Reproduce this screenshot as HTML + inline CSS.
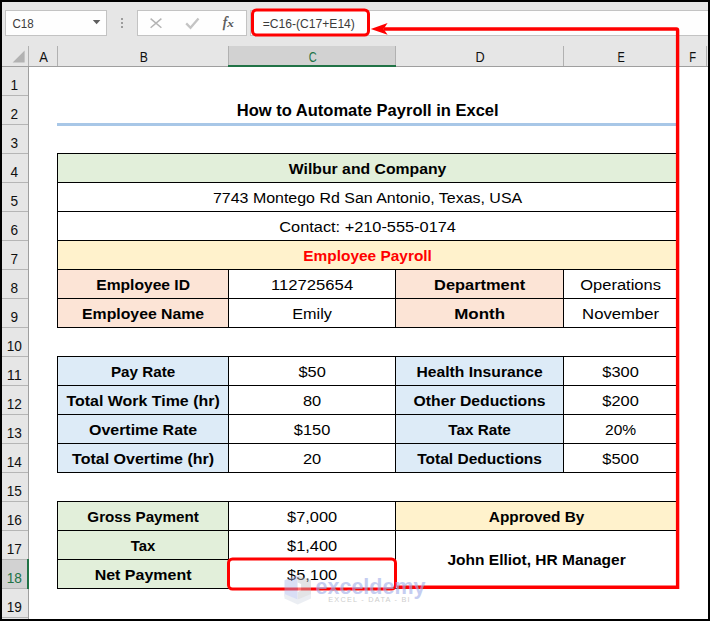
<!DOCTYPE html>
<html lang="en"><head><meta charset="utf-8"><title>How to Automate Payroll in Excel</title>
<style>
html,body{margin:0;padding:0;background:#fff;}
body{width:710px;height:621px;overflow:hidden;}
svg{display:block;font-family:"Liberation Sans",sans-serif;}
svg rect:not([rx]){shape-rendering:crispEdges;}
</style></head><body>
<svg width="710" height="621" viewBox="0 0 710 621">
<rect x="0" y="0" width="710" height="621" fill="#000"/>
<rect x="2" y="2" width="706" height="617" fill="#fff"/>
<rect x="2" y="2" width="706" height="64" fill="#e6e6e6"/>
<rect x="5" y="10" width="102" height="26" fill="#c3c3c3"/>
<rect x="6" y="11" width="100" height="24" fill="#fefefe"/>
<rect x="137" y="10" width="110" height="26" fill="#c3c3c3"/>
<rect x="138" y="11" width="108" height="24" fill="#fefefe"/>
<rect x="250" y="10" width="458" height="26" fill="#c3c3c3"/>
<rect x="251" y="11" width="457" height="24" fill="#fefefe"/>
<text x="23.00" y="27.70" font-size="12" text-anchor="middle" textLength="21.20" lengthAdjust="spacingAndGlyphs" fill="#3b3b3b">C18</text>
<path d="M92.8 20h7.6l-3.8 4.2z" fill="#5e5e5e"/>
<rect x="121" y="18" width="2" height="2" fill="#9c9c9c"/>
<rect x="121" y="22" width="2" height="2" fill="#9c9c9c"/>
<rect x="121" y="26" width="2" height="2" fill="#9c9c9c"/>
<path d="M150.6 18.6l10.8 9.2M161.4 18.6l-10.8 9.2" stroke="#b4b4b4" stroke-width="1.5" fill="none"/>
<path d="M186.2 23.4l4.3 4.3l8-9.2" stroke="#c4c4c4" stroke-width="2.3" fill="none"/>
<text x="222.8" y="26.7" font-family="'Liberation Serif',serif" font-style="italic" font-size="14.6" fill="#505050" stroke="#505050" stroke-width="0.35">f</text>
<text x="227.3" y="27.4" font-family="'Liberation Serif',serif" font-style="italic" font-weight="700" font-size="10" textLength="6.6" lengthAdjust="spacingAndGlyphs" fill="#555">x</text>
<text x="262.70" y="27.80" font-size="12" text-anchor="start" textLength="92.20" lengthAdjust="spacingAndGlyphs" fill="#3b3b3b">=C16-(C17+E14)</text>
<rect x="2" y="66" width="26" height="553" fill="#e6e6e6"/>
<rect x="228" y="46" width="168" height="20" fill="#d2d2d2"/>
<rect x="2" y="559" width="26" height="29" fill="#d2d2d2"/>
<rect x="2" y="66" width="706" height="1" fill="#9f9f9f"/>
<rect x="28" y="46" width="1" height="20" fill="#b1b1b1"/>
<rect x="57" y="46" width="1" height="20" fill="#b1b1b1"/>
<rect x="228" y="46" width="1" height="20" fill="#b1b1b1"/>
<rect x="395" y="46" width="1" height="20" fill="#b1b1b1"/>
<rect x="563" y="46" width="1" height="20" fill="#b1b1b1"/>
<rect x="677" y="46" width="1" height="20" fill="#b1b1b1"/>
<rect x="706" y="46" width="1" height="20" fill="#b1b1b1"/>
<rect x="228" y="65" width="168" height="2" fill="#217346"/>
<rect x="28" y="66" width="1" height="553" fill="#9f9f9f"/>
<rect x="2" y="95" width="26" height="1" fill="#b5b5b5"/>
<rect x="2" y="124" width="26" height="1" fill="#b5b5b5"/>
<rect x="2" y="153" width="26" height="1" fill="#b5b5b5"/>
<rect x="2" y="182" width="26" height="1" fill="#b5b5b5"/>
<rect x="2" y="211" width="26" height="1" fill="#b5b5b5"/>
<rect x="2" y="240" width="26" height="1" fill="#b5b5b5"/>
<rect x="2" y="269" width="26" height="1" fill="#b5b5b5"/>
<rect x="2" y="298" width="26" height="1" fill="#b5b5b5"/>
<rect x="2" y="327" width="26" height="1" fill="#b5b5b5"/>
<rect x="2" y="356" width="26" height="1" fill="#b5b5b5"/>
<rect x="2" y="385" width="26" height="1" fill="#b5b5b5"/>
<rect x="2" y="414" width="26" height="1" fill="#b5b5b5"/>
<rect x="2" y="443" width="26" height="1" fill="#b5b5b5"/>
<rect x="2" y="472" width="26" height="1" fill="#b5b5b5"/>
<rect x="2" y="501" width="26" height="1" fill="#b5b5b5"/>
<rect x="2" y="530" width="26" height="1" fill="#b5b5b5"/>
<rect x="2" y="559" width="26" height="1" fill="#b5b5b5"/>
<rect x="2" y="588" width="26" height="1" fill="#b5b5b5"/>
<rect x="2" y="617" width="26" height="1" fill="#b5b5b5"/>
<rect x="27" y="559" width="2" height="30" fill="#217346"/>
<path d="M24.6 50.6V62.6H12.6z" fill="#b2b2b2"/>
<text x="43.70" y="61.70" font-size="14" text-anchor="middle" textLength="8.66" lengthAdjust="spacingAndGlyphs" fill="#101010">A</text>
<text x="143.70" y="61.70" font-size="14" text-anchor="middle" textLength="8.14" lengthAdjust="spacingAndGlyphs" fill="#101010">B</text>
<text x="312.70" y="61.70" font-size="14" text-anchor="middle" textLength="7.98" lengthAdjust="spacingAndGlyphs" fill="#217346">C</text>
<text x="480.20" y="61.70" font-size="14" text-anchor="middle" textLength="9.20" lengthAdjust="spacingAndGlyphs" fill="#101010">D</text>
<text x="621.20" y="61.70" font-size="14" text-anchor="middle" textLength="7.30" lengthAdjust="spacingAndGlyphs" fill="#101010">E</text>
<text x="692.70" y="61.70" font-size="14" text-anchor="middle" textLength="6.87" lengthAdjust="spacingAndGlyphs" fill="#101010">F</text>
<text x="14.30" y="89.60" font-size="14.2" text-anchor="middle" textLength="7.58" lengthAdjust="spacingAndGlyphs" fill="#101010">1</text>
<text x="14.30" y="118.60" font-size="14.2" text-anchor="middle" textLength="7.58" lengthAdjust="spacingAndGlyphs" fill="#101010">2</text>
<text x="14.30" y="147.60" font-size="14.2" text-anchor="middle" textLength="7.58" lengthAdjust="spacingAndGlyphs" fill="#101010">3</text>
<text x="14.30" y="176.60" font-size="14.2" text-anchor="middle" textLength="7.58" lengthAdjust="spacingAndGlyphs" fill="#101010">4</text>
<text x="14.30" y="205.60" font-size="14.2" text-anchor="middle" textLength="7.58" lengthAdjust="spacingAndGlyphs" fill="#101010">5</text>
<text x="14.30" y="234.60" font-size="14.2" text-anchor="middle" textLength="7.58" lengthAdjust="spacingAndGlyphs" fill="#101010">6</text>
<text x="14.30" y="263.60" font-size="14.2" text-anchor="middle" textLength="7.58" lengthAdjust="spacingAndGlyphs" fill="#101010">7</text>
<text x="14.30" y="292.60" font-size="14.2" text-anchor="middle" textLength="7.58" lengthAdjust="spacingAndGlyphs" fill="#101010">8</text>
<text x="14.30" y="321.60" font-size="14.2" text-anchor="middle" textLength="7.58" lengthAdjust="spacingAndGlyphs" fill="#101010">9</text>
<text x="14.30" y="350.60" font-size="14.2" text-anchor="middle" textLength="15.17" lengthAdjust="spacingAndGlyphs" fill="#101010">10</text>
<text x="14.30" y="379.60" font-size="14.2" text-anchor="middle" textLength="15.17" lengthAdjust="spacingAndGlyphs" fill="#101010">11</text>
<text x="14.30" y="408.60" font-size="14.2" text-anchor="middle" textLength="15.17" lengthAdjust="spacingAndGlyphs" fill="#101010">12</text>
<text x="14.30" y="437.60" font-size="14.2" text-anchor="middle" textLength="15.17" lengthAdjust="spacingAndGlyphs" fill="#101010">13</text>
<text x="14.30" y="466.60" font-size="14.2" text-anchor="middle" textLength="15.17" lengthAdjust="spacingAndGlyphs" fill="#101010">14</text>
<text x="14.30" y="495.60" font-size="14.2" text-anchor="middle" textLength="15.17" lengthAdjust="spacingAndGlyphs" fill="#101010">15</text>
<text x="14.30" y="524.60" font-size="14.2" text-anchor="middle" textLength="15.17" lengthAdjust="spacingAndGlyphs" fill="#101010">16</text>
<text x="14.30" y="553.60" font-size="14.2" text-anchor="middle" textLength="15.17" lengthAdjust="spacingAndGlyphs" fill="#101010">17</text>
<text x="14.30" y="582.60" font-size="14.2" text-anchor="middle" textLength="15.17" lengthAdjust="spacingAndGlyphs" fill="#217346">18</text>
<text x="14.30" y="611.60" font-size="14.2" text-anchor="middle" textLength="15.17" lengthAdjust="spacingAndGlyphs" fill="#101010">19</text>
<rect x="57" y="153" width="620" height="29" fill="#e2efda"/>
<rect x="57" y="240" width="620" height="29" fill="#fff2cc"/>
<rect x="57" y="269" width="171" height="58" fill="#fce4d6"/>
<rect x="395" y="269" width="168" height="58" fill="#fce4d6"/>
<rect x="57" y="356" width="171" height="116" fill="#ddebf7"/>
<rect x="395" y="356" width="168" height="116" fill="#ddebf7"/>
<rect x="57" y="501" width="171" height="87" fill="#e2efda"/>
<rect x="395" y="501" width="282" height="29" fill="#fff2cc"/>
<rect x="57" y="123" width="620" height="3" fill="#a8c7e7"/>
<rect x="57" y="153" width="621" height="1" fill="#000"/>
<rect x="57" y="182" width="621" height="1" fill="#000"/>
<rect x="57" y="211" width="621" height="1" fill="#000"/>
<rect x="57" y="240" width="621" height="1" fill="#000"/>
<rect x="57" y="269" width="621" height="1" fill="#000"/>
<rect x="57" y="298" width="621" height="1" fill="#000"/>
<rect x="57" y="327" width="621" height="1" fill="#000"/>
<rect x="57" y="153" width="1" height="175" fill="#000"/>
<rect x="676" y="153" width="1" height="175" fill="#000"/>
<rect x="228" y="269" width="1" height="58" fill="#000"/>
<rect x="395" y="269" width="1" height="58" fill="#000"/>
<rect x="563" y="269" width="1" height="58" fill="#000"/>
<rect x="57" y="356" width="621" height="1" fill="#000"/>
<rect x="57" y="385" width="621" height="1" fill="#000"/>
<rect x="57" y="414" width="621" height="1" fill="#000"/>
<rect x="57" y="443" width="621" height="1" fill="#000"/>
<rect x="57" y="472" width="621" height="1" fill="#000"/>
<rect x="57" y="356" width="1" height="117" fill="#000"/>
<rect x="228" y="356" width="1" height="117" fill="#000"/>
<rect x="395" y="356" width="1" height="117" fill="#000"/>
<rect x="563" y="356" width="1" height="117" fill="#000"/>
<rect x="57" y="501" width="621" height="1" fill="#000"/>
<rect x="57" y="588" width="621" height="1" fill="#000"/>
<rect x="57" y="530" width="621" height="1" fill="#000"/>
<rect x="57" y="559" width="338" height="1" fill="#000"/>
<rect x="57" y="501" width="1" height="88" fill="#000"/>
<rect x="228" y="501" width="1" height="88" fill="#000"/>
<rect x="395" y="501" width="1" height="88" fill="#000"/>
<text x="367.75" y="116.00" font-size="16.5" text-anchor="middle" textLength="261.80" lengthAdjust="spacingAndGlyphs" fill="#000" font-weight="700">How to Automate Payroll in Excel</text>
<text x="367.60" y="174.00" font-size="15.5" text-anchor="middle" textLength="157.47" lengthAdjust="spacingAndGlyphs" fill="#000" font-weight="700">Wilbur and Company</text>
<text x="367.60" y="203.00" font-size="15.5" text-anchor="middle" textLength="309.18" lengthAdjust="spacingAndGlyphs" fill="#000">7743 Montego Rd San Antonio, Texas, USA</text>
<text x="367.60" y="232.00" font-size="15.5" text-anchor="middle" textLength="176.56" lengthAdjust="spacingAndGlyphs" fill="#000">Contact: +210-555-0174</text>
<text x="367.60" y="261.00" font-size="15.5" text-anchor="middle" textLength="128.61" lengthAdjust="spacingAndGlyphs" fill="#ff0000" font-weight="700">Employee Payroll</text>
<text x="143.10" y="290.00" font-size="15.5" text-anchor="middle" textLength="93.74" lengthAdjust="spacingAndGlyphs" fill="#000" font-weight="700">Employee ID</text>
<text x="312.10" y="290.00" font-size="15.5" text-anchor="middle" textLength="82.11" lengthAdjust="spacingAndGlyphs" fill="#000">112725654</text>
<text x="479.60" y="290.00" font-size="15.5" text-anchor="middle" textLength="91.03" lengthAdjust="spacingAndGlyphs" fill="#000" font-weight="700">Department</text>
<text x="620.60" y="290.00" font-size="15.5" text-anchor="middle" textLength="80.71" lengthAdjust="spacingAndGlyphs" fill="#000">Operations</text>
<text x="143.10" y="319.00" font-size="15.5" text-anchor="middle" textLength="122.04" lengthAdjust="spacingAndGlyphs" fill="#000" font-weight="700">Employee Name</text>
<text x="312.10" y="319.00" font-size="15.5" text-anchor="middle" textLength="39.58" lengthAdjust="spacingAndGlyphs" fill="#000">Emily</text>
<text x="479.60" y="319.00" font-size="15.5" text-anchor="middle" textLength="50.80" lengthAdjust="spacingAndGlyphs" fill="#000" font-weight="700">Month</text>
<text x="620.60" y="319.00" font-size="15.5" text-anchor="middle" textLength="77.01" lengthAdjust="spacingAndGlyphs" fill="#000">November</text>
<text x="143.10" y="377.00" font-size="15.5" text-anchor="middle" textLength="64.32" lengthAdjust="spacingAndGlyphs" fill="#000" font-weight="700">Pay Rate</text>
<text x="312.10" y="377.00" font-size="15.5" text-anchor="middle" textLength="27.37" lengthAdjust="spacingAndGlyphs" fill="#000">$50</text>
<text x="479.60" y="377.00" font-size="15.5" text-anchor="middle" textLength="126.14" lengthAdjust="spacingAndGlyphs" fill="#000" font-weight="700">Health Insurance</text>
<text x="620.60" y="377.00" font-size="15.5" text-anchor="middle" textLength="36.49" lengthAdjust="spacingAndGlyphs" fill="#000">$300</text>
<text x="143.10" y="406.00" font-size="15.5" text-anchor="middle" textLength="153.25" lengthAdjust="spacingAndGlyphs" fill="#000" font-weight="700">Total Work Time (hr)</text>
<text x="312.10" y="406.00" font-size="15.5" text-anchor="middle" textLength="18.25" lengthAdjust="spacingAndGlyphs" fill="#000">80</text>
<text x="479.60" y="406.00" font-size="15.5" text-anchor="middle" textLength="131.92" lengthAdjust="spacingAndGlyphs" fill="#000" font-weight="700">Other Deductions</text>
<text x="620.60" y="406.00" font-size="15.5" text-anchor="middle" textLength="36.49" lengthAdjust="spacingAndGlyphs" fill="#000">$200</text>
<text x="143.10" y="435.00" font-size="15.5" text-anchor="middle" textLength="108.23" lengthAdjust="spacingAndGlyphs" fill="#000" font-weight="700">Overtime Rate</text>
<text x="312.10" y="435.00" font-size="15.5" text-anchor="middle" textLength="36.49" lengthAdjust="spacingAndGlyphs" fill="#000">$150</text>
<text x="479.60" y="435.00" font-size="15.5" text-anchor="middle" textLength="62.54" lengthAdjust="spacingAndGlyphs" fill="#000" font-weight="700">Tax Rate</text>
<text x="620.60" y="435.00" font-size="15.5" text-anchor="middle" textLength="31.11" lengthAdjust="spacingAndGlyphs" fill="#000">20%</text>
<text x="143.10" y="464.00" font-size="15.5" text-anchor="middle" textLength="142.05" lengthAdjust="spacingAndGlyphs" fill="#000" font-weight="700">Total Overtime (hr)</text>
<text x="312.10" y="464.00" font-size="15.5" text-anchor="middle" textLength="18.25" lengthAdjust="spacingAndGlyphs" fill="#000">20</text>
<text x="479.60" y="464.00" font-size="15.5" text-anchor="middle" textLength="124.79" lengthAdjust="spacingAndGlyphs" fill="#000" font-weight="700">Total Deductions</text>
<text x="620.60" y="464.00" font-size="15.5" text-anchor="middle" textLength="36.49" lengthAdjust="spacingAndGlyphs" fill="#000">$500</text>
<text x="143.10" y="522.00" font-size="15.5" text-anchor="middle" textLength="111.51" lengthAdjust="spacingAndGlyphs" fill="#000" font-weight="700">Gross Payment</text>
<text x="312.10" y="522.00" font-size="15.5" text-anchor="middle" textLength="50.11" lengthAdjust="spacingAndGlyphs" fill="#000">$7,000</text>
<text x="143.10" y="551.00" font-size="15.5" text-anchor="middle" textLength="24.54" lengthAdjust="spacingAndGlyphs" fill="#000" font-weight="700">Tax</text>
<text x="312.10" y="551.00" font-size="15.5" text-anchor="middle" textLength="50.11" lengthAdjust="spacingAndGlyphs" fill="#000">$1,400</text>
<text x="143.10" y="580.00" font-size="15.5" text-anchor="middle" textLength="96.86" lengthAdjust="spacingAndGlyphs" fill="#000" font-weight="700">Net Payment</text>
<text x="312.10" y="580.00" font-size="15.5" text-anchor="middle" textLength="50.11" lengthAdjust="spacingAndGlyphs" fill="#000">$5,100</text>
<text x="536.60" y="522.00" font-size="15.5" text-anchor="middle" textLength="95.61" lengthAdjust="spacingAndGlyphs" fill="#000" font-weight="700">Approved By</text>
<text x="536.60" y="564.60" font-size="15.5" text-anchor="middle" textLength="178.22" lengthAdjust="spacingAndGlyphs" fill="#000" font-weight="700">John Elliot, HR Manager</text>
<rect x="252.5" y="9.9" width="116" height="25.2" rx="4" ry="4" fill="none" stroke="#ff0000" stroke-width="3"/>
<rect x="228.5" y="559" width="167" height="30" rx="4" ry="4" fill="none" stroke="#ff0000" stroke-width="3"/>
<path d="M397 587.2H677.6V30.2Q677.6 29 676.4 29H384" fill="none" stroke="#ff0000" stroke-width="3.4"/>
<path d="M370.8 29L387.6 23L383.6 29L387.6 34.8Z" fill="#ff0000"/>
<g opacity="0.62">
<g opacity="0.7"><path d="M284.5 580.2L297.7 575V600L284.5 596.5z" fill="#aab6ea"/><path d="M297.7 575L311 580.2V596.5L297.7 600z" fill="#bfc2c8"/><path d="M297.7 582.5l3.4 1.4v6.6l-3.4 1.4z" fill="#fff"/><path d="M284.5 594L297.7 599.5L311 594V598.6L297.7 604.5L284.5 598.6z" fill="#d3d9e6"/></g>
<text x="315.5" y="593.8" font-size="22.4" font-weight="700" textLength="110" lengthAdjust="spacingAndGlyphs" fill="#a3b0ea">exceldemy</text>
<text x="328.2" y="602.3" font-size="7.3" textLength="81.4" lengthAdjust="spacing" fill="#b0b0b0">EXCEL - DATA - BI</text>
</g>
</svg>
</body></html>
